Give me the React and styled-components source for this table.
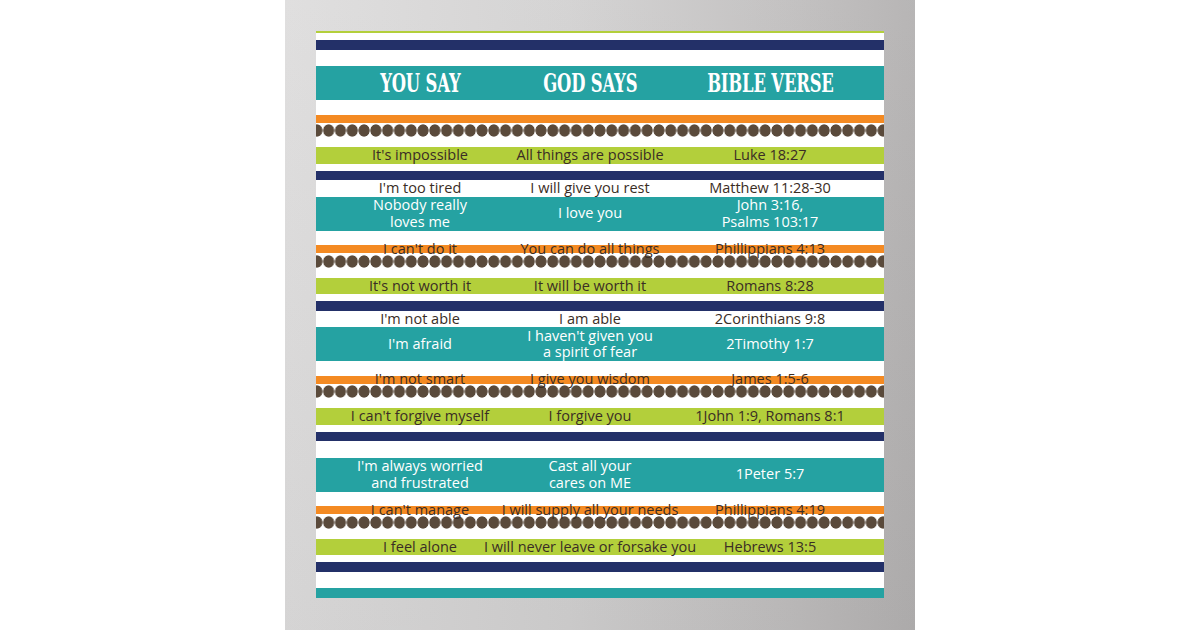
import React from "react";
import styled, { createGlobalStyle } from "styled-components";

const Global = createGlobalStyle`
  html, body { margin: 0; padding: 0; background: #ffffff; }
  #root { width: 1200px; height: 630px; }
`;

const C = {
  navy: "#233068",
  teal: "#25a2a2",
  orange: "#f48a22",
  lime: "#b3cf3b",
  white: "#ffffff",
  dot: "#5a4a3b",
  ink: "#3a2d25",
};

const Page = styled.div`
  width: 1200px;
  height: 630px;
  display: flex;
  justify-content: center;
`;

const Panel = styled.div`
  width: 630px;
  height: 630px;
  box-sizing: border-box;
  padding: 31px;
  background:
    linear-gradient(to bottom, rgba(255, 255, 255, 0.06), rgba(0, 0, 0, 0.04)),
    linear-gradient(to right, #dedddd 0%, #d2d1d1 45%, #c0bebe 80%, #b3b1b1 100%);
`;

const Poster = styled.div`
  width: 568px;
  height: 567px;
  overflow: hidden;
  background: #fff;
  display: flex;
  flex-direction: column;
`;

const Stripe = styled.div`
  flex: none;
  height: ${(p) => p.$h}px;
  background: ${(p) => p.$c};
`;

const Dots = styled.div`
  flex: none;
  height: 13px;
  margin-top: 1.5px;
  background-image: radial-gradient(ellipse closest-side, ${C.dot} 88%, transparent 100%);
  background-size: 11.8px 13px;
  background-position: center top;
  background-repeat: repeat-x;
`;

const TextRow = styled.div`
  flex: none;
  z-index: 1;
  height: ${(p) => p.$h}px;
  background: ${(p) => p.$c};
  display: flex;
  align-items: center;
`;

const Cell = styled.div`
  flex: none;
  width: ${(p) => p.$w}px;
  display: flex;
  flex-direction: column;
  align-items: center;
  justify-content: center;
  white-space: nowrap;
  font-family: "Open Sans", "DejaVu Sans", sans-serif;
  font-size: 14.5px;
  line-height: 16.5px;
  color: ${(p) => (p.$light ? "#ffffff" : C.ink)};
`;

const HeadText = styled.span`
  display: inline-block;
  font-family: "DejaVu Serif", "Liberation Serif", serif;
  font-stretch: condensed;
  font-weight: 700;
  font-size: 26px;
  line-height: 30px;
  color: #ffffff;
  transform: scaleX(0.7);
  letter-spacing: -0.2px;
`;

const WIDTHS = [208, 132, 228];

function Row({ h, c, light, cols }) {
  return (
    <TextRow $h={h} $c={c}>
      {cols.map((lines, i) => (
        <Cell key={i} $w={WIDTHS[i]} $light={light}>
          {(Array.isArray(lines) ? lines : [lines]).map((l, j) => (
            <span key={j}>{l}</span>
          ))}
        </Cell>
      ))}
    </TextRow>
  );
}

function Header() {
  return (
    <TextRow $h={34} $c={C.teal}>
      {["YOU SAY", "GOD SAYS", "BIBLE VERSE"].map((t, i) => (
        <Cell key={t} $w={WIDTHS[i]} $light>
          <HeadText>{t}</HeadText>
        </Cell>
      ))}
    </TextRow>
  );
}

function Band({ header, white, teal, orange, lime }) {
  return (
    <>
      <Stripe $h={9.5} $c={C.navy} />
      {white ? <Row h={16.5} c={C.white} cols={white} /> : <Stripe $h={16.5} $c={C.white} />}
      {header ? <Header /> : teal ? <Row h={34} c={C.teal} light cols={teal} /> : <Stripe $h={34} $c={C.teal} />}
      <Stripe $h={14.5} $c={C.white} />
      {orange ? <Row h={8} c={C.orange} cols={orange} /> : <Stripe $h={8} $c={C.orange} />}
      <Dots />
      <Stripe $h={10} $c={C.white} />
      <Row h={16.5} c={C.lime} cols={lime} />
      <Stripe $h={7} $c={C.white} />
    </>
  );
}

const bands = [
  {
    header: true,
    lime: ["It's impossible", "All things are possible", "Luke 18:27"],
  },
  {
    white: ["I'm too tired", "I will give you rest", "Matthew 11:28-30"],
    teal: [["Nobody really", "loves me"], ["I love you"], ["John 3:16,", "Psalms 103:17"]],
    orange: ["I can't do it", "You can do all things", "Phillippians 4:13"],
    lime: ["It's not worth it", "It will be worth it", "Romans 8:28"],
  },
  {
    white: ["I'm not able", "I am able", "2Corinthians 9:8"],
    teal: [["I'm afraid"], ["I haven't given you", "a spirit of fear"], ["2Timothy 1:7"]],
    orange: ["I'm not smart", "I give you wisdom", "James 1:5-6"],
    lime: ["I can't forgive myself", "I forgive you", "1John 1:9, Romans 8:1"],
  },
  {
    teal: [["I'm always worried", "and frustrated"], ["Cast all your", "cares on ME"], ["1Peter 5:7"]],
    orange: ["I can't manage", "I will supply all your needs", "Phillippians 4:19"],
    lime: ["I feel alone", "I will never leave or forsake you", "Hebrews 13:5"],
  },
];

export default function App() {
  return (
    <Page>
      <Global />
      <Panel>
        <Poster>
          <Stripe $h={1.5} $c={C.lime} />
          <Stripe $h={7.5} $c={C.white} />
          {bands.map((b, i) => (
            <Band key={i} {...b} />
          ))}
          <Stripe $h={9.5} $c={C.navy} />
          <Stripe $h={16.5} $c={C.white} />
          <Stripe $h={40} $c={C.teal} />
        </Poster>
      </Panel>
    </Page>
  );
}
